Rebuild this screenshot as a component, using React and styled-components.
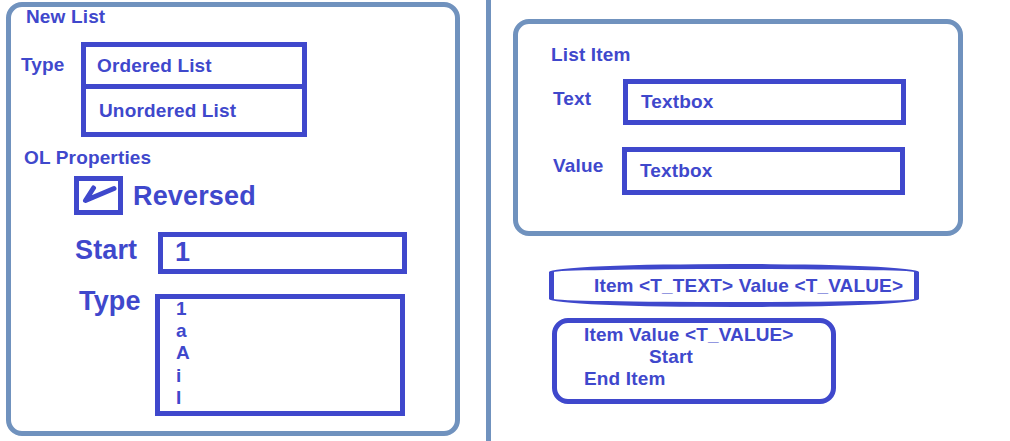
import React from "react";
import styled, { createGlobalStyle } from "styled-components";

const INK = "#3F48CC";
const FRAME = "#7092BE";

const GlobalStyle = createGlobalStyle`
  html, body {
    margin: 0;
    padding: 0;
    background: #ffffff;
  }
  body {
    font-family: "Liberation Sans", Arial, sans-serif;
    font-weight: bold;
    color: ${INK};
    letter-spacing: 0.15px;
  }
  * { box-sizing: border-box; }
`;

const Page = styled.div`
  display: flex;
  align-items: flex-start;
  width: 1010px;
  height: 441px;
  overflow: hidden;
`;

const Panel = styled.section`
  display: flex;
  flex-direction: column;
  align-items: flex-start;
  margin: ${(p) => p.$margin};
  width: ${(p) => p.$width}px;
  height: ${(p) => p.$height}px;
  border: 5px solid ${FRAME};
  border-radius: 16px;
  flex-shrink: 0;
`;

const Divider = styled.div`
  align-self: stretch;
  width: 5px;
  margin-left: 26px;
  background: ${FRAME};
  flex-shrink: 0;
`;

const RightColumn = styled.div`
  display: flex;
  flex-direction: column;
  align-items: flex-start;
`;

const Heading = styled.div`
  font-size: 19px;
  line-height: ${(p) => p.$lh || 22}px;
  margin: ${(p) => p.$top}px 0 0 ${(p) => p.$left}px;
  white-space: nowrap;
`;

const FieldRow = styled.div`
  display: flex;
  align-items: flex-start;
  margin: ${(p) => p.$top}px 0 0 ${(p) => p.$left}px;
`;

const FieldLabel = styled.div`
  width: ${(p) => p.$width}px;
  margin-top: ${(p) => p.$offset}px;
  font-size: ${(p) => p.$size}px;
  line-height: ${(p) => (p.$size > 20 ? 30 : 22)}px;
  white-space: nowrap;
  flex-shrink: 0;
`;

const OptionGroup = styled.div`
  display: flex;
  flex-direction: column;
  width: 226px;
`;

const OptionBox = styled.div`
  display: flex;
  align-items: center;
  height: ${(p) => p.$height}px;
  margin-top: ${(p) => (p.$stacked ? -5 : 0)}px;
  padding-left: ${(p) => p.$indent}px;
  border: 5px solid ${INK};
  font-size: 19px;
  line-height: 22px;
  white-space: nowrap;
`;

const CheckRow = styled.label`
  display: flex;
  align-items: center;
  gap: 10px;
  margin: 7px 0 0 63px;
`;

const CheckBox = styled.span`
  display: flex;
  width: 49px;
  height: 39px;
  border: 5px solid ${INK};
`;

const CheckLabel = styled.span`
  font-size: 27px;
  line-height: 30px;
`;

const InputBox = styled.div`
  display: flex;
  align-items: ${(p) => (p.$size > 20 ? "flex-start" : "center")};
  width: ${(p) => p.$width}px;
  height: ${(p) => p.$height}px;
  padding-left: ${(p) => p.$indent}px;
  border: 5px solid ${INK};
  font-size: ${(p) => p.$size}px;
  line-height: ${(p) => (p.$size > 20 ? 30 : 22)}px;
  white-space: nowrap;
  flex-shrink: 0;
`;

const ListBox = styled.div`
  width: 250px;
  height: 122px;
  padding-left: 16px;
  border: 5px solid ${INK};
  flex-shrink: 0;
`;

const TypeList = styled.ul`
  margin: -1px 0 0;
  padding: 0;
  list-style: none;
  font-size: 19px;
  line-height: 22.2px;
`;

const Pill = styled.div`
  display: flex;
  align-items: center;
  width: 370px;
  height: 43px;
  margin: 28px 0 0 58px;
  padding-left: 40px;
  border: 5px solid ${INK};
  border-radius: 50% / 8px;
  font-size: 19px;
  line-height: 22px;
  white-space: nowrap;
`;

const TemplateBox = styled.div`
  width: 284px;
  height: 86px;
  margin: 11px 0 0 61px;
  padding: 1px 0 0 27px;
  border: 5px solid ${INK};
  border-radius: 16px;
  font-size: 19px;
  line-height: 22.2px;
`;

const TemplateLine = styled.div`
  padding-left: ${(p) => p.$indent || 0}px;
  white-space: nowrap;
`;

const CheckMark = () => (
  <svg width="39" height="29" viewBox="0 0 39 29" aria-hidden="true">
    <path
      d="M14.5 7 L6.5 19.5 L35 7.5"
      fill="none"
      stroke={INK}
      strokeWidth="5"
      strokeLinecap="round"
      strokeLinejoin="round"
    />
  </svg>
);

export default function App() {
  return (
    <Page>
      <GlobalStyle />
      <Panel $margin="2px 0 0 6px" $width={454} $height={434}>
        <Heading $top={0} $left={15} $lh={20}>
          New List
        </Heading>
        <FieldRow $top={15} $left={10}>
          <FieldLabel $width={60} $offset={12} $size={19}>
            Type
          </FieldLabel>
          <OptionGroup>
            <OptionBox $height={47} $indent={11}>
              Ordered List
            </OptionBox>
            <OptionBox $height={53} $indent={13} $stacked>
              Unordered List
            </OptionBox>
          </OptionGroup>
        </FieldRow>
        <Heading $top={10} $left={13}>
          OL Properties
        </Heading>
        <CheckRow>
          <CheckBox>
            <CheckMark />
          </CheckBox>
          <CheckLabel>Reversed</CheckLabel>
        </CheckRow>
        <FieldRow $top={17} $left={64}>
          <FieldLabel $width={83} $offset={3} $size={27}>
            Start
          </FieldLabel>
          <InputBox $width={249} $height={42} $indent={12} $size={27}>
            1
          </InputBox>
        </FieldRow>
        <FieldRow $top={20} $left={68}>
          <FieldLabel $width={76} $offset={-8} $size={27}>
            Type
          </FieldLabel>
          <ListBox>
            <TypeList>
              <li>1</li>
              <li>a</li>
              <li>A</li>
              <li>i</li>
              <li>I</li>
            </TypeList>
          </ListBox>
        </FieldRow>
      </Panel>

      <Divider />

      <RightColumn>
        <Panel $margin="19px 0 0 22px" $width={450} $height={217}>
          <Heading $top={20} $left={33}>
            List Item
          </Heading>
          <FieldRow $top={13} $left={35}>
            <FieldLabel $width={70} $offset={9} $size={19}>
              Text
            </FieldLabel>
            <InputBox $width={283} $height={46} $indent={13} $size={19}>
              Textbox
            </InputBox>
          </FieldRow>
          <FieldRow $top={22} $left={35}>
            <FieldLabel $width={69} $offset={8} $size={19}>
              Value
            </FieldLabel>
            <InputBox $width={283} $height={48} $indent={13} $size={19}>
              Textbox
            </InputBox>
          </FieldRow>
        </Panel>
        <Pill>Item &lt;T_TEXT&gt; Value &lt;T_VALUE&gt;</Pill>
        <TemplateBox>
          <TemplateLine>Item Value &lt;T_VALUE&gt;</TemplateLine>
          <TemplateLine $indent={65}>Start</TemplateLine>
          <TemplateLine>End Item</TemplateLine>
        </TemplateBox>
      </RightColumn>
    </Page>
  );
}
